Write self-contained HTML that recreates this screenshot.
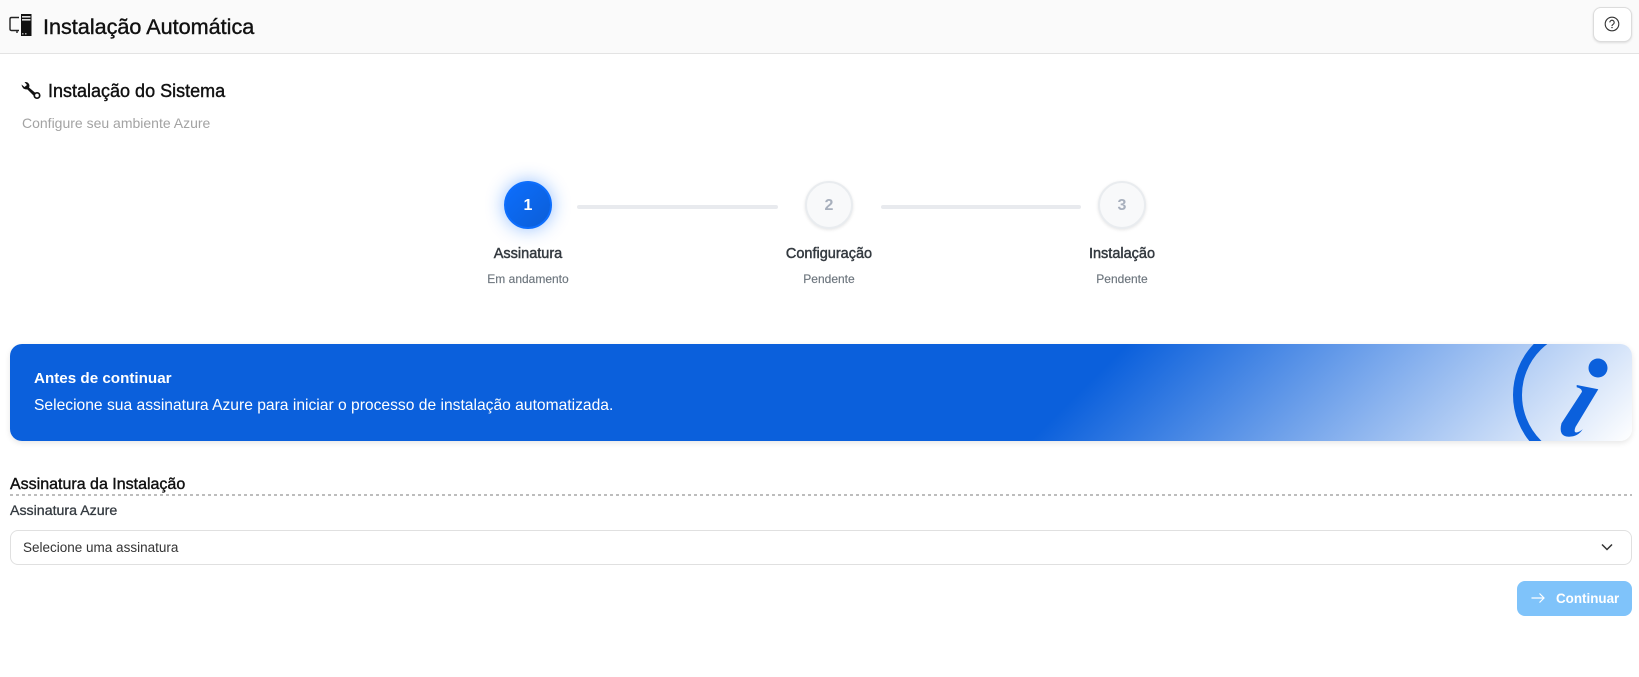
<!DOCTYPE html>
<html lang="pt">
<head>
<meta charset="utf-8">
<title>Instalação Automática</title>
<style>
html,body{margin:0;padding:0;background:#fff;width:1639px;height:677px;overflow:hidden;font-family:"Liberation Sans",sans-serif;}
.a{position:absolute;white-space:nowrap;}
.c{transform:translateX(-50%);text-align:center;}
.circle{position:absolute;box-sizing:border-box;width:48px;height:48px;border-radius:50%;text-align:center;line-height:46px;font-weight:700;font-size:16px;}
.off{background:#f8f9fa;border:2px solid #e9ecef;color:#a8b0bd;box-shadow:0 1px 3px rgba(0,0,0,.1);}
.line{position:absolute;height:4px;background:#e8eaee;border-radius:2px;top:204.5px;}
.lab{font-size:14.5px;line-height:20px;font-weight:400;-webkit-text-stroke:.45px #343a40;color:#343a40;top:243.5px;}
.sub{font-size:12px;line-height:16px;color:#6c757d;-webkit-text-stroke:.15px #6c757d;top:271px;}
</style>
</head>
<body>
<div class="a" style="left:0;top:0;width:1639px;height:54px;box-sizing:border-box;background:#fafafa;border-bottom:1px solid #e3e3e3;"></div>
<svg class="a" style="left:0;top:0" width="60" height="54" viewBox="0 0 60 54">
  <path d="M19 17.5H11.5Q10 17.5 10 19V29Q10 30.5 11.5 30.5H19M17 30.5v2.5" fill="none" stroke="#222" stroke-width="1.4"/>
  <rect x="21" y="14" width="10.5" height="22" fill="#111"/>
  <rect x="22" y="16" width="8.5" height="1.6" fill="#ddd"/>
  <rect x="22" y="19" width="8.5" height="1.6" fill="#ddd"/>
  <rect x="22" y="33" width="1.5" height="1.5" fill="#aaa"/>
  <rect x="25" y="33" width="1.5" height="1.5" fill="#aaa"/>
</svg>
<div class="a" style="left:43px;top:12.5px;font-size:21.6px;line-height:28px;color:#111;-webkit-text-stroke:.4px #111;">Instalação Automática</div>

<div class="a" style="left:1593px;top:7px;width:39px;height:35px;box-sizing:border-box;background:#fff;border:1px solid #dcdcdc;border-radius:8px;box-shadow:0 1px 2px rgba(0,0,0,.12);"></div>
<svg class="a" style="left:1603px;top:15px" width="18" height="18" viewBox="0 0 18 18">
  <circle cx="9" cy="9" r="6.8" fill="none" stroke="#333" stroke-width="1.1"/>
  <path d="M6.8 7.4a2.2 2.2 0 1 1 3.5 1.8c-.8.5-1.3.9-1.3 1.8" fill="none" stroke="#333" stroke-width="1.1"/>
  <circle cx="9" cy="12.6" r=".7" fill="#333"/>
</svg>

<svg class="a" style="left:20px;top:80px" width="24" height="22" viewBox="0 0 24 22">
  <path d="M1.5 4.5L4.5 7L7 5L4.5 2Q9 1.5 9.5 6L9 7.5L15.5 13L13.5 15.5L7.5 9.5Q2 9.5 1.5 4.5Z" fill="#111"/>
  <circle cx="17" cy="15.5" r="2.7" fill="none" stroke="#111" stroke-width="1.7"/>
</svg>
<div class="a" style="left:48px;top:79px;font-size:18px;line-height:24px;color:#111;-webkit-text-stroke:.4px #111;">Instalação do Sistema</div>
<div class="a" style="left:22px;top:113px;font-size:14px;line-height:20px;color:#a3a3a3;">Configure seu ambiente Azure</div>

<div class="circle" style="left:504px;top:181px;background:linear-gradient(135deg,#0d6efd,#0b5ed7);color:#fff;border:2px solid #0d6efd;box-shadow:0 0 18px rgba(13,110,253,.45);">1</div>
<div class="line" style="left:577px;width:201px;"></div>
<div class="circle off" style="left:805px;top:181px;">2</div>
<div class="line" style="left:881px;width:200px;"></div>
<div class="circle off" style="left:1098px;top:181px;">3</div>

<div class="a c lab" style="left:528px;">Assinatura</div>
<div class="a c sub" style="left:528px;">Em andamento</div>
<div class="a c lab" style="left:829px;">Configuração</div>
<div class="a c sub" style="left:829px;">Pendente</div>
<div class="a c lab" style="left:1122px;">Instalação</div>
<div class="a c sub" style="left:1122px;">Pendente</div>

<div class="a" style="left:10px;top:344px;width:1622px;height:97px;border-radius:12px;background:linear-gradient(135deg,#0b60dc 0%,#0b60dc 65%,#ffffff 100%);box-shadow:0 2px 6px rgba(0,0,0,.1);overflow:hidden;">
  <svg style="position:absolute;left:0;top:0" width="1622" height="97" viewBox="10 344 1622 97">
    <circle cx="1586" cy="395" r="68.5" fill="none" stroke="#0b60dc" stroke-width="9"/>
    <circle cx="1598" cy="368" r="9.5" fill="#0b60dc"/>
    <path d="M1576.7 385L1598.3 389.3L1575.5 427Q1573.5 432 1576 432.5Q1579 432.5 1582.7 429.3Q1578 436.7 1569 436.7Q1558 436.7 1561.5 423.3L1582 391.7Q1582 388.5 1576.7 387.3Z" fill="#0b60dc"/>
  </svg>
</div>
<div class="a" style="left:34px;top:369px;font-size:15.2px;line-height:20px;font-weight:700;color:#fff;">Antes de continuar</div>
<div class="a" style="left:34px;top:396px;font-size:15.63px;line-height:20px;color:#fff;">Selecione sua assinatura Azure para iniciar o processo de instalação automatizada.</div>

<div class="a" style="left:10px;top:474.5px;font-size:16px;line-height:20px;color:#111;-webkit-text-stroke:.4px #111;">Assinatura da Instalação</div>
<div class="a" style="left:10px;top:494px;width:1622px;height:2px;background:repeating-linear-gradient(90deg,#bdbdbd 0 3px,transparent 3px 6px);"></div>
<div class="a" style="left:10px;top:501px;font-size:14.2px;line-height:20px;color:#343a40;-webkit-text-stroke:.3px #343a40;">Assinatura Azure</div>

<div class="a" style="left:10px;top:530px;width:1622px;height:35px;box-sizing:border-box;border:1px solid #e0e0e0;border-radius:8px;background:#fff;"></div>
<div class="a" style="left:23px;top:538px;font-size:13.5px;line-height:20px;color:#333;">Selecione uma assinatura</div>
<svg class="a" style="left:1599px;top:541px" width="16" height="12" viewBox="0 0 16 12">
  <path d="M3 3.5L8 8.5l5-5" fill="none" stroke="#333" stroke-width="1.5"/>
</svg>

<div class="a" style="left:1517px;top:581px;width:115px;height:35px;border-radius:8px;background:#7fc3fa;"></div>
<svg class="a" style="left:1530px;top:590px" width="16" height="16" viewBox="0 0 16 16">
  <path d="M1.5 8H14M9.5 3.5L14 8l-4.5 4.5" fill="none" stroke="#fff" stroke-width="1.2"/>
</svg>
<div class="a" style="left:1556px;top:588.5px;font-size:13.4px;line-height:20px;font-weight:700;color:#fff;">Continuar</div>
</body>
</html>
